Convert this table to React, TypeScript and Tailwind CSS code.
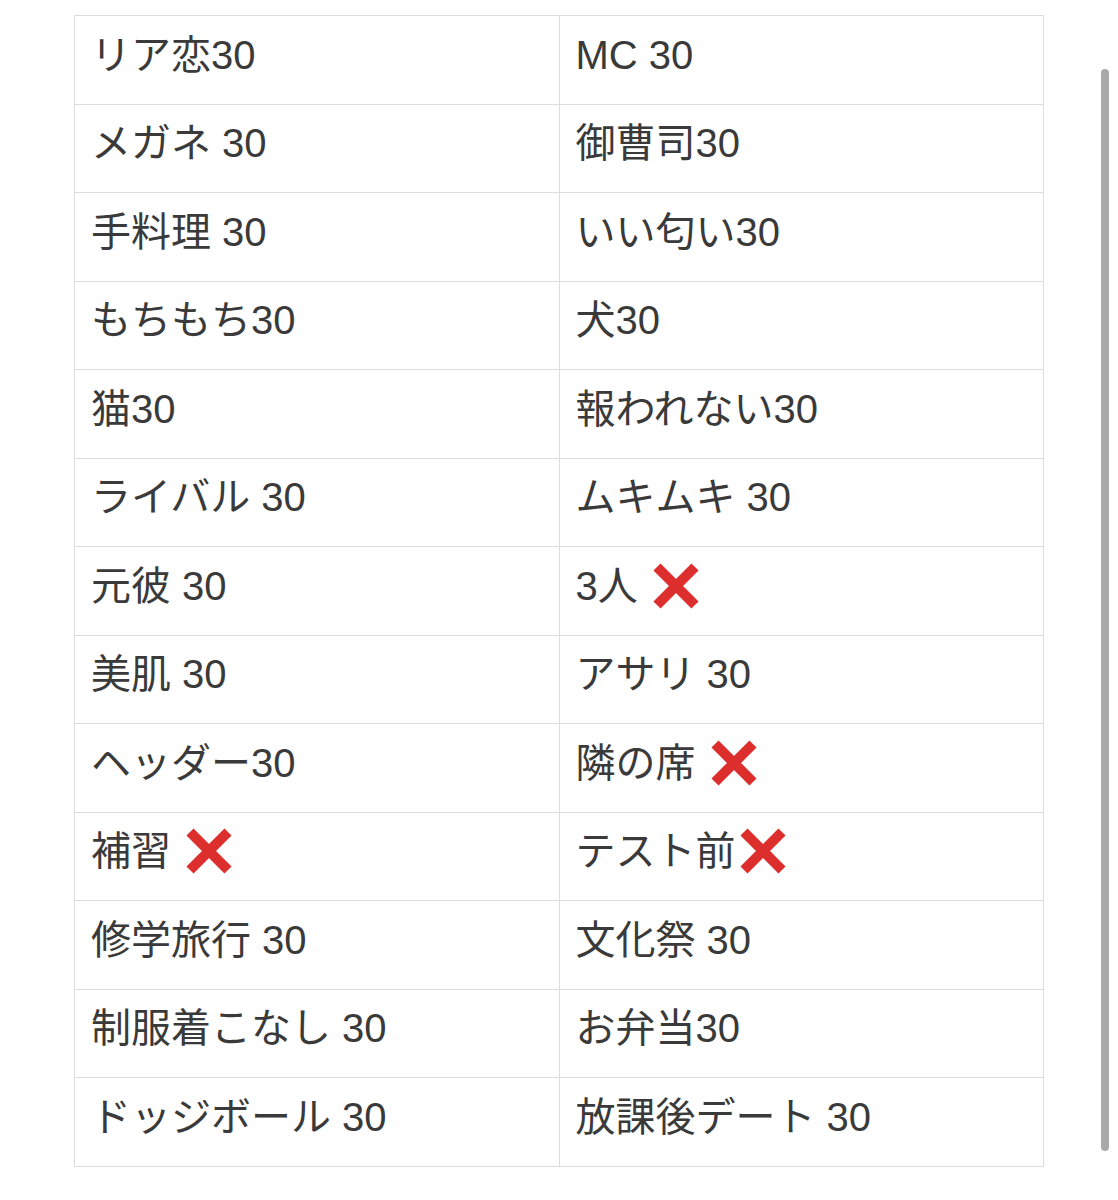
import React from 'react';

const rows: [string, string][] = [
  ['リア恋30', 'MC 30'],
  ['メガネ 30', '御曹司30'],
  ['手料理 30', 'いい匂い30'],
  ['もちもち30', '犬30'],
  ['猫30', '報われない30'],
  ['ライバル 30', 'ムキムキ 30'],
  ['元彼 30', '3人 ❌'],
  ['美肌 30', 'アサリ 30'],
  ['ヘッダー30', '隣の席 ❌'],
  ['補習 ❌', 'テスト前❌'],
  ['修学旅行 30', '文化祭 30'],
  ['制服着こなし 30', 'お弁当30'],
  ['ドッジボール 30', '放課後デート 30'],
];

const Cross = () => (
  <svg width="54" height="54" viewBox="0 0 54 54" className="inline-block align-middle">
    <path d="M8 8 L46 46 M46 8 L8 46" stroke="#dd2e2e" strokeWidth="10" strokeLinecap="butt" />
  </svg>
);

const Cell = ({ text }: { text: string }) => {
  const parts = text.split('❌');
  return (
    <td className="border border-[#dcdcdc] pl-[16px] pb-[10px] align-middle h-[88.5px]">
      <span className="inline-flex items-center whitespace-pre">
        {parts[0]}
        {parts.length > 1 && <Cross />}
      </span>
    </td>
  );
};

export default function App() {
  return (
    <div
      className="relative w-[1118px] h-[1200px] bg-white overflow-hidden"
      style={{ fontFamily: '"Liberation Sans", "Noto Sans CJK JP", sans-serif' }}
    >
      <div className="pt-[15px] pl-[74px]">
        <table className="border-collapse w-[970px] table-fixed text-[40px] text-[#3a3a3a] leading-none">
          <tbody>
            {rows.map((r, i) => (
              <tr key={i}>
                <Cell text={r[0]} />
                <Cell text={r[1]} />
              </tr>
            ))}
          </tbody>
        </table>
      </div>
      {/* scrollbar */}
      <div className="absolute left-[1101px] top-[69px] w-[8px] h-[1082px] rounded-full bg-[#a9a9a9]" />
    </div>
  );
}
